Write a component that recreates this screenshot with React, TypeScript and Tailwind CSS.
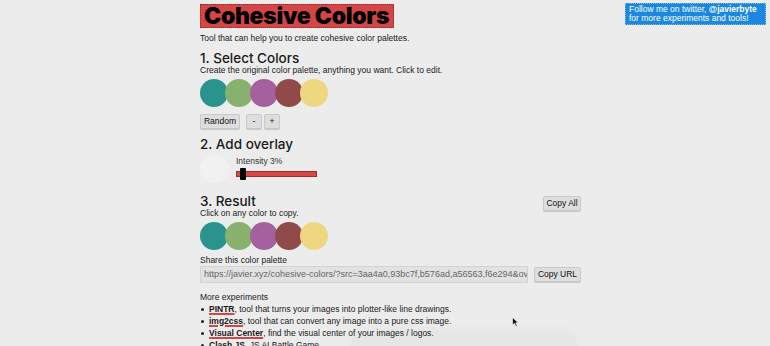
import React from 'react';

const palette = ['#2b938d', '#88b16e', '#a5609f', '#914a4a', '#efd681'];

const Swatches = () => (
  <div className="flex">
    {palette.map((c, i) => (
      <div
        key={i}
        className={`w-[28px] h-[28px] rounded-full ${i > 0 ? '-ml-[3px]' : ''}`}
        style={{ backgroundColor: c }}
      />
    ))}
  </div>
);

const Btn = ({ children, className = '' }: { children: React.ReactNode; className?: string }) => (
  <button
    className={`h-[15px] px-0 whitespace-nowrap text-[8.5px] leading-none text-[#111] bg-[#dedede] border border-[#c9c9c9] rounded-[2px] shadow-[0_1px_0_rgba(0,0,0,0.15)] ${className}`}
  >
    {children}
  </button>
);

const experiments = [
  { name: 'PINTR', text: ', tool that turns your images into plotter-like line drawings.' },
  { name: 'img2css', text: ', tool that can convert any image into a pure css image.' },
  { name: 'Visual Center', text: ', find the visual center of your images / logos.' },
  { name: 'Clash.JS', text: ', JS AI Battle Game.' },
];

export default function App() {
  return (
    <div className="relative w-[770px] h-[346px] overflow-hidden bg-[#ececec] text-[#1a1a1a] font-['Liberation_Sans',Arial,sans-serif]">
      {/* faint toast peeking in at the bottom */}
      <div className="absolute left-[350px] top-[331px] w-[228px] h-[40px] rounded-[18px] bg-[#e6e6e6] shadow-[0_-2px_8px_rgba(0,0,0,0.03)]" />

      <div className="relative ml-[200px] w-[381px] flex flex-col">
        <div className="mt-[4px] self-start h-[24px] w-[194px] px-[3px] bg-[#d64545] border border-dotted border-[#8a2a2a] flex items-center">
          <h1 className="text-[23px] font-black leading-none tracking-[-0.3px] text-black font-['Inter',sans-serif]">Cohesive Colors</h1>
        </div>
        <p className="mt-[5px] text-[8.5px] leading-[10px]">Tool that can help you to create cohesive color palettes.</p>

        <h2 className="mt-[9px] text-[13.5px] font-medium leading-[13px] font-['Inter',sans-serif]">1. Select Colors</h2>
        <p className="text-[8.5px] leading-[10px]">Create the original color palette, anything you want. Click to edit.</p>
        <div className="mt-[4px]">
          <Swatches />
        </div>
        <div className="mt-[7px] flex gap-[6px]">
          <Btn className="w-[40px]">Random</Btn>
          <div className="flex gap-[2px]">
            <Btn className="w-[16px]">-</Btn>
            <Btn className="w-[16px]">+</Btn>
          </div>
        </div>

        <h2 className="mt-[8px] text-[13.5px] font-medium leading-[14px] font-['Inter',sans-serif]">2. Add overlay</h2>
        <div className="mt-[4px] flex gap-[7px]">
          <div className="w-[29px] h-[28px] rounded-full bg-[#f1f1f1]" />
          <div className="pt-[1px]">
            <p className="text-[8.5px] leading-[10px] text-[#333]">Intensity 3%</p>
            <div className="relative mt-[5px] w-[81px] h-[6px] bg-[#d94646] border border-[#9b2f2f]">
              <div className="absolute left-[3px] -top-[4px] w-[6px] h-[12px] bg-black rounded-[1px]" />
            </div>
          </div>
        </div>

        <div className="mt-[12px] flex justify-between items-start">
          <div>
            <h2 className="text-[13.5px] font-medium leading-[13px] font-['Inter',sans-serif]">3. Result</h2>
            <p className="text-[8.5px] leading-[10px]">Click on any color to copy.</p>
          </div>
          <Btn className="mt-[1px] w-[38px]">Copy All</Btn>
        </div>
        <div className="mt-[4px]">
          <Swatches />
        </div>
        <p className="mt-[5px] text-[8.5px] leading-[10px]">Share this color palette</p>
        <div className="mt-[1px] flex justify-between items-center">
          <div className="w-[328px] h-[17px] bg-[#e2e2e2] border border-[#d3d3d3] flex items-center px-[3px] overflow-hidden whitespace-nowrap text-[9px] text-[#666]">
            https://javier.xyz/cohesive-colors/?src=3aa4a0,93bc7f,b576ad,a56563,f6e294&amp;ove
          </div>
          <Btn className="w-[47px]">Copy URL</Btn>
        </div>

        <p className="mt-[9px] text-[8.5px] leading-[10px] text-[#222]">More experiments</p>
        <ul className="mt-[1px] flex flex-col">
          {experiments.map((e) => (
            <li key={e.name} className="flex items-center whitespace-nowrap text-[8.5px] leading-[12px]">
              <span className="w-[3px] h-[3px] rounded-full bg-[#222] ml-[1px] mr-[5px]" />
              <span className="font-bold underline decoration-[#d64545] decoration-[1.5px] underline-offset-[1px]">{e.name}</span>
              <span>{e.text}</span>
            </li>
          ))}
        </ul>
      </div>

      <div className="absolute left-[625px] top-[3px] w-[141px] h-[22px] bg-[#1c87de] border border-dotted border-[#7fb8ea] px-[3px] flex flex-col justify-center whitespace-nowrap text-white text-[8.5px] leading-[9px]">
        <span>Follow me on twitter, <b>@javierbyte</b></span>
        <span>for more experiments and tools!</span>
      </div>

      <svg className="absolute left-[512px] top-[317px]" width="7" height="10" viewBox="0 0 7 10">
        <path d="M0.5 0.5 L0.5 8 L2.5 6.3 L4 9.5 L5.2 9 L3.8 5.8 L6.3 5.8 Z" fill="#111" stroke="#fff" strokeWidth="0.6" />
      </svg>
    </div>
  );
}
